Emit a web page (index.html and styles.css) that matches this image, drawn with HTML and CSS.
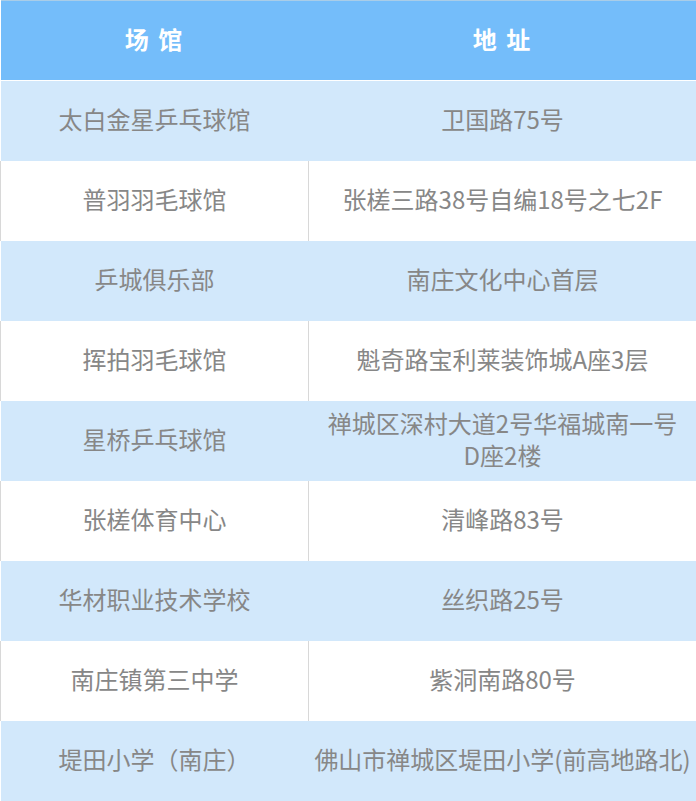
FILE: index.html
```html
<!DOCTYPE html>
<html lang="zh-CN">
<head>
<meta charset="utf-8">
<link rel="stylesheet" href="styles.css">
</head>
<body>
<table class="venues">
  <colgroup><col class="col-name"><col class="col-addr"></colgroup>
  <thead>
    <tr><th>场 馆</th><th>地 址</th></tr>
  </thead>
  <tbody>
    <tr><td>太白金星乒乓球馆</td><td>卫国路75号</td></tr>
    <tr><td>普羽羽毛球馆</td><td>张槎三路38号自编18号之七2F</td></tr>
    <tr><td>乒城俱乐部</td><td>南庄文化中心首层</td></tr>
    <tr><td>挥拍羽毛球馆</td><td>魁奇路宝利莱装饰城A座3层</td></tr>
    <tr><td>星桥乒乓球馆</td><td class="two-line">禅城区深村大道2号华福城南一号<br>D座2楼</td></tr>
    <tr><td>张槎体育中心</td><td>清峰路83号</td></tr>
    <tr><td>华材职业技术学校</td><td>丝织路25号</td></tr>
    <tr><td>南庄镇第三中学</td><td>紫洞南路80号</td></tr>
    <tr><td>堤田小学（南庄）</td><td>佛山市禅城区堤田小学(前高地路北)</td></tr>
  </tbody>
</table>
</body>
</html>
```

FILE: styles.css
```css
html, body {
  margin: 0;
  padding: 0;
  background: #ffffff;
}
body {
  font-family: "Noto Sans CJK SC", "Noto Sans", sans-serif;
}
.venues {
  width: 696px;
  border-collapse: collapse;
  table-layout: fixed;
}
.col-name { width: 308px; }
.col-addr { width: 388px; }
.venues th {
  height: 80px;
  padding: 0 0 4px;
  background: #74bdfa;
  color: #ffffff;
  font-size: 24px;
  font-weight: 700;
  letter-spacing: 2px;
  text-align: center;
  border-top: 1px solid #a9cde8;
  border-bottom: 1px solid #ffffff;
  box-sizing: border-box;
}
.venues td {
  height: 80px;
  padding: 0 2px 4px;
  box-sizing: border-box;
  text-align: center;
  vertical-align: middle;
  color: #878787;
  font-size: 24px;
  line-height: 32px;
  white-space: nowrap;
}
.venues tbody tr:nth-child(odd) td {
  background: #d2e8fb;
}
.venues tbody tr:nth-child(even) td {
  background: #ffffff;
  border-left: 1px solid #d8d8d8;
  border-right: 1px solid #d8d8d8;
}
```
